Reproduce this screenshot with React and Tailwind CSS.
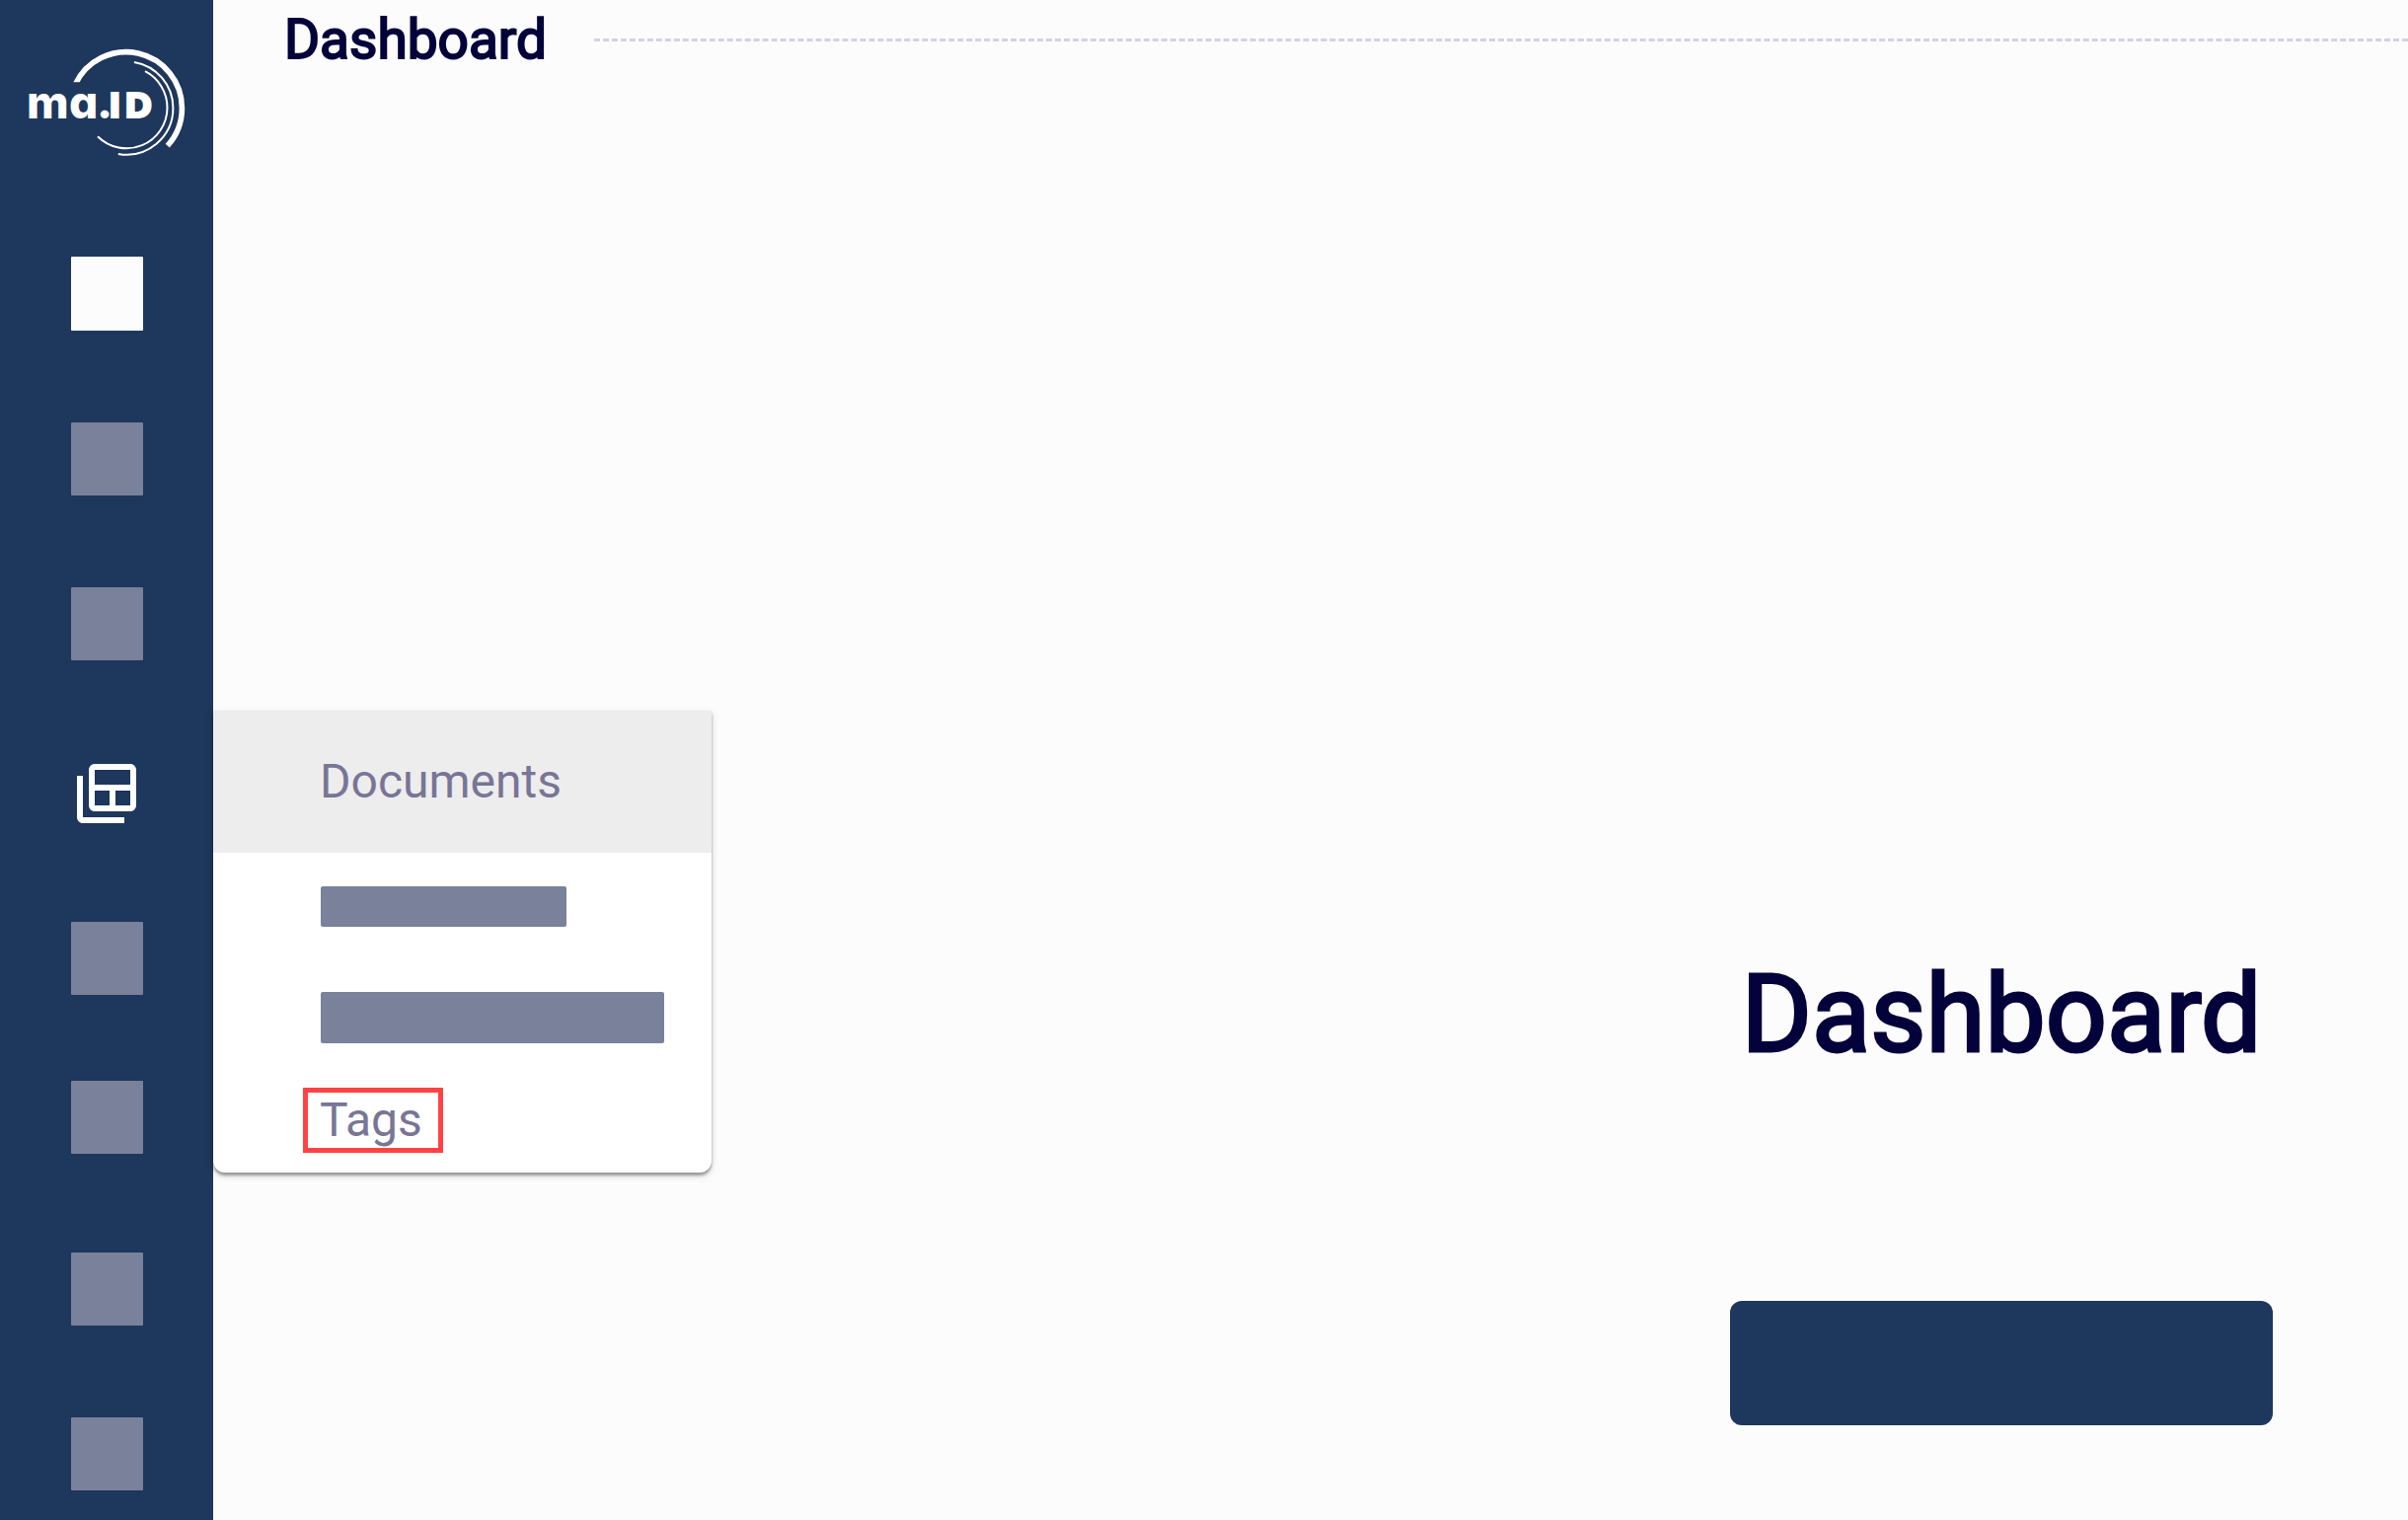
const ITEMS = [
  { id: "home", gap: "mt-[80px]", box: "h-[75px] bg-[#fcfcfc]" },
  { id: "people", gap: "mt-[93px]", box: "h-[74px] bg-[#7a819a]" },
  { id: "forms", gap: "mt-[93px]", box: "h-[74px] bg-[#7a819a]" },
  { id: "documents", gap: "mt-[99px]", icon: true },
  { id: "reports", gap: "mt-[94px]", box: "h-[74px] bg-[#7a819a]" },
  { id: "billing", gap: "mt-[87px]", box: "h-[74px] bg-[#7a819a]" },
  { id: "team", gap: "mt-[100px]", box: "h-[74px] bg-[#7a819a]" },
  { id: "settings", gap: "mt-[93px]", box: "h-[74px] bg-[#7a819a]" },
];

function Logo() {
  return (
    <svg width="216" height="180" viewBox="0 0 216 180" className="block" role="img">
      <g fill="none" stroke="#ffffff">
        {/* outer, middle and inner rings */}
        <path d="M76.300 85.500A56.700 56.700 0 0 1 184.400 109.500A56.700 56.700 0 0 1 169.700 147.700" strokeWidth="5.600" />
        <path d="M135.900 62.900A47.200 47.200 0 0 1 175.400 109.500A47.200 47.200 0 0 1 119.800 155.900" strokeWidth="2" />
        <path d="M147 72.200A41.300 41.300 0 0 1 169.500 109A41.300 41.300 0 0 1 99 138.200" strokeWidth="2" />
      </g>
      {/* flat cut where the outer ring starts */}
      <rect x="70" y="83.200" width="16" height="6" fill="#1e375c" />
      <g className="font-['Inter',sans-serif] font-extrabold" fill="#ffffff" fontSize="46">
        <text y="120" style={{ fontFeatureSettings: '"cv11"' }}>
          <tspan x="27">m</tspan>
          <tspan x="70">a</tspan>
          <tspan x="98">.</tspan>
        </text>
        <text
          y="119"
          fontSize="34"
          stroke="#ffffff"
          strokeWidth="2"
          className="font-['DejaVu_Sans',sans-serif] font-bold"
        >
          <tspan x="110">I</tspan>
          <tspan x="126">D</tspan>
        </text>
      </g>
    </svg>
  );
}

function DocumentsIcon() {
  return (
    <svg width="72" height="72" viewBox="0 0 24 24" className="block" fill="#ffffff">
      <path d="M4 6H2v14c0 1.100.9 2 2 2h14v-2H4V6z" />
      <path d="M20 2H8c-1.100 0-2 .9-2 2v12c0 1.100.9 2 2 2h12c1.100 0 2-.9 2-2V4c0-1.100-.9-2-2-2zm0 2v5H8V4h12zM8 11h5v5H8v-5zm7 5v-5h5v5h-5z" />
    </svg>
  );
}

function Sidebar() {
  return (
    <aside className="w-[216px] shrink-0 bg-[#1e375c]">
      <Logo />
      <nav className="flex flex-col px-[72px]">
        {ITEMS.map((item) => (
          <button key={item.id} type="button" aria-label={item.id} className={`block w-[73px] ${item.gap}`}>
            {item.icon ? (
              <DocumentsIcon />
            ) : (
              <span className={`block rounded-[1px] ${item.box}`} />
            )}
          </button>
        ))}
      </nav>
    </aside>
  );
}

function DocumentsMenu() {
  return (
    <div className="absolute left-[216px] top-[720px] w-[505px] rounded-b-xl bg-white pb-5 text-5xl text-[#787596] shadow-[0_3px_3px_rgba(0,0,0,0.35),0_3px_10px_rgba(0,0,0,0.12)]">
      <a href="#documents" className="flex h-36 items-center bg-[#ededed] pl-[108px]">
        Documents
      </a>
      <a href="#first" className="ml-[109px] mt-[34px] block h-[41px] w-[249px] rounded-[2px] bg-[#7a819a]" />
      <a href="#second" className="ml-[109px] mt-[66px] block h-[52px] w-[348px] rounded-[2px] bg-[#7a819a]" />
      <a
        href="#tags"
        className="ml-[91px] mt-[45px] flex h-[66px] w-[142px] items-center border-5 border-[#ff4343] pl-3"
      >
        Tags
      </a>
    </div>
  );
}

export default function App() {
  return (
    <div className="relative flex min-h-screen bg-[#fcfcfc] font-['Roboto',sans-serif]">
      <Sidebar />

      <main className="flex grow flex-col">
        <header className="flex h-20 items-center pl-[72px]">
          <h1 className="text-[55px] leading-none text-[#04023a] [-webkit-text-stroke:2px_#04023a]">Dashboard</h1>
          <div className="ml-12 grow border-t-3 border-dashed border-[#d3d2de]" />
        </header>

        <section className="flex flex-col items-center self-end pt-[892px] pr-[137px]">
          <h2 className="text-[109px] leading-[112px] text-[#04023a] [-webkit-text-stroke:3px_#04023a]">Dashboard</h2>
          <button type="button" className="mt-[234px] h-[126px] w-[550px] rounded-xl bg-[#1e375c]" />
        </section>
      </main>

      <DocumentsMenu />
    </div>
  );
}
